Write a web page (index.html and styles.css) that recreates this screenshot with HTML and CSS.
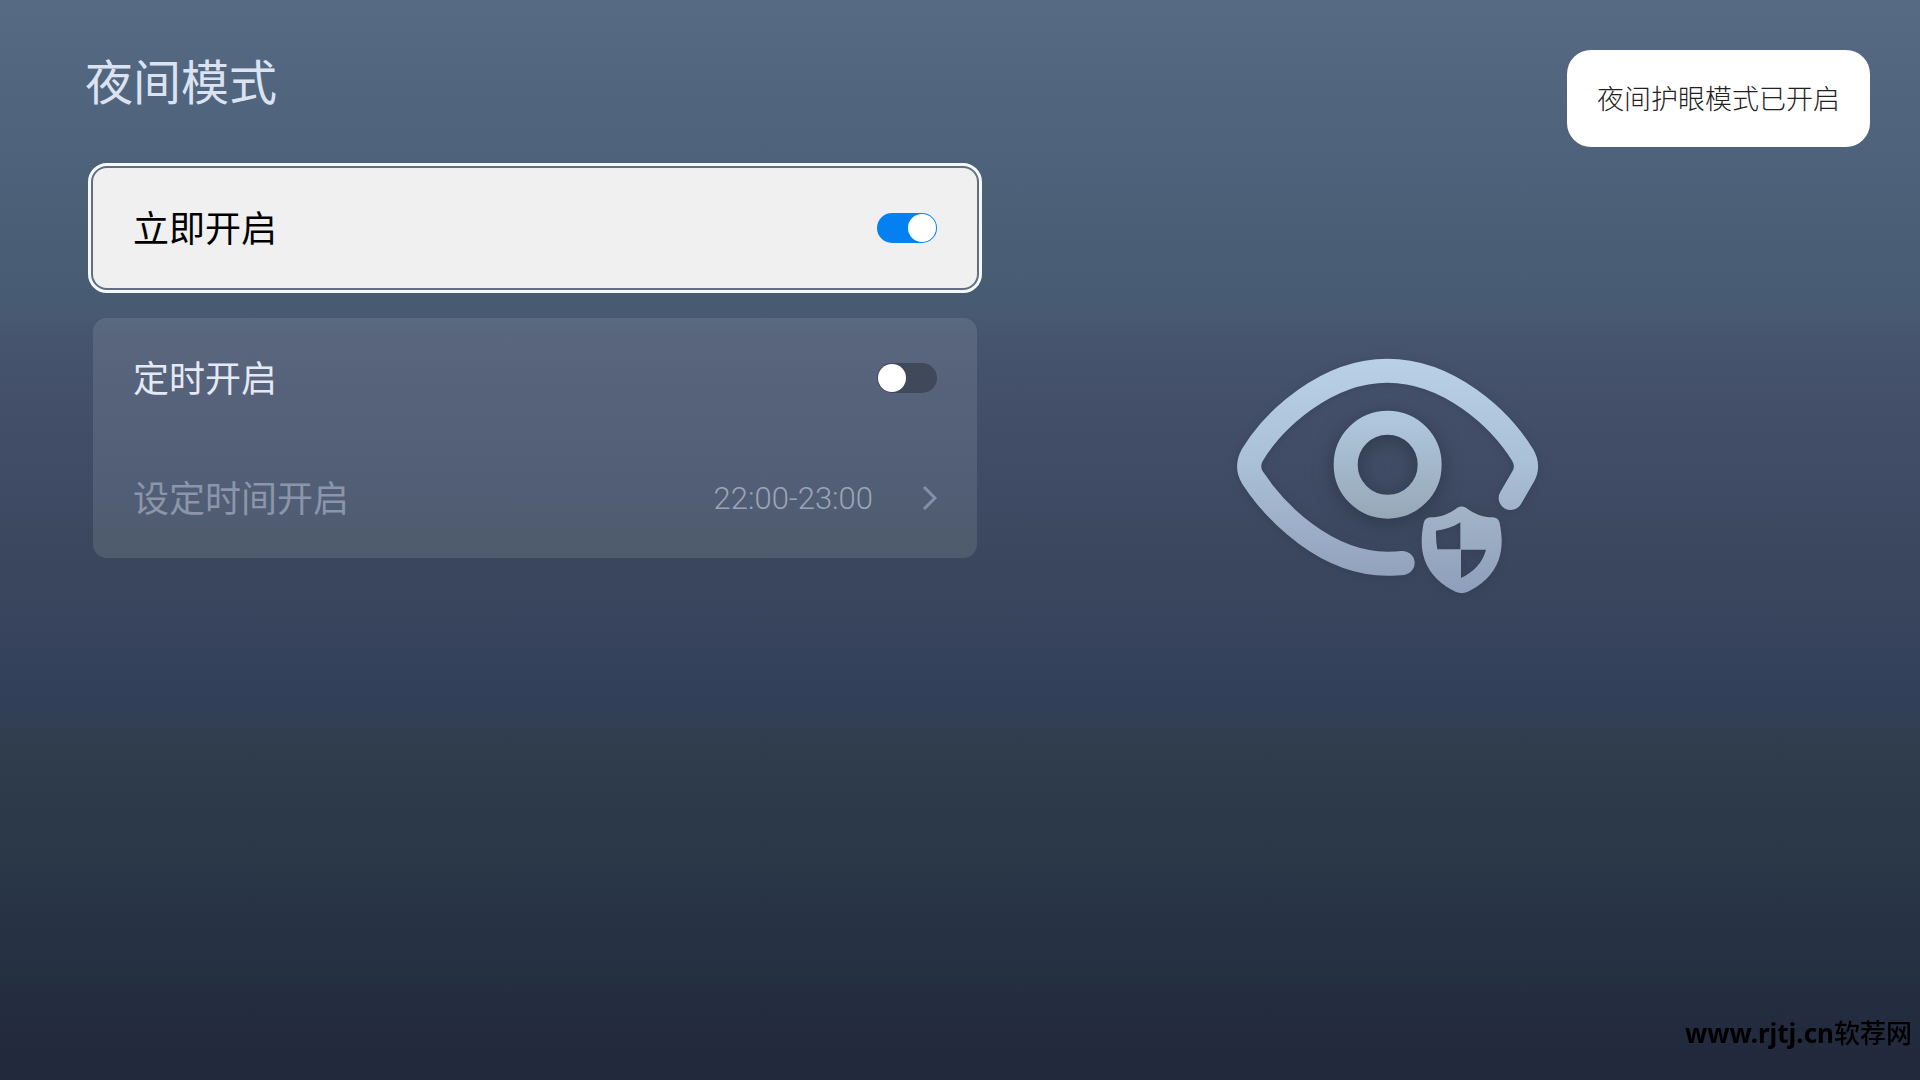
FILE: index.html
```
<!DOCTYPE html>
<html lang="zh-CN">
	<head>
		<meta charset="utf-8" />
		<title>夜间模式</title>
		<link rel="stylesheet" href="styles.css">
	</head>
	<body>
		<h1>夜间模式</h1>

		<div class="container">
			<div class="list">
				<div class="card focus">
					<label class="row">
						<span>立即开启</span>
						<input type="checkbox" class="switch" checked />
					</label>
				</div>

				<div class="card group">
					<label class="row">
						<span>定时开启</span>
						<input type="checkbox" class="switch" />
					</label>
					<button type="button" class="row time" disabled>
						<span>设定时间开启</span>
						<span class="value">22:00-23:00</span>
						<svg class="arrow" viewBox="0 0 16 28">
							<path d="M3 3l11 11L3 25" />
						</svg>
					</button>
				</div>
			</div>

			<div class="picture">
				<svg class="eye" viewBox="0 0 1020 810">
					<defs>
						<linearGradient id="line" gradientUnits="userSpaceOnUse" x1="0" y1="55" x2="0" y2="710">
							<stop offset="0" stop-color="#b9d0e6" />
							<stop offset=".5" stop-color="#a9bfd5" />
							<stop offset="1" stop-color="#92a1bc" />
						</linearGradient>
						<linearGradient id="ball" gradientUnits="userSpaceOnUse" x1="0" y1="212" x2="0" y2="536">
							<stop offset="0" stop-color="#b1c9e0" />
							<stop offset="1" stop-color="#96a7b7" />
						</linearGradient>
						<linearGradient id="guard" gradientUnits="userSpaceOnUse" x1="0" y1="500" x2="0" y2="760">
							<stop offset="0" stop-color="#a3b4c8" />
							<stop offset="1" stop-color="#8d9fba" />
						</linearGradient>
					</defs>
					<path class="lid" stroke="url(#line)" d="M548 669C532 671 518 671 502 671C318 671 166 518 97 412Q78 380 97 345C160 240 318 92 502 92C688 92 842 238 908 345Q928 380 908 412L872 474" />
					<circle class="ball" stroke="url(#ball)" cx="503" cy="374" r="126" />
					<path class="guard" fill="url(#guard)" fill-rule="evenodd" d="M712 503Q725 496 738 503C764 522 788 532 818 532Q835 533 839 549C847 590 848 625 836 660C820 704 785 736 742 756Q725 763 708 756C665 736 630 704 614 660C602 625 603 590 611 549Q615 533 632 532C662 532 686 522 712 503ZM721 547C699 561 676 569 648 572Q647 600 652 628H721ZM723 629V714C764 694 788 666 798 629Z" />
				</svg>
			</div>
		</div>

		<div class="toast" role="status">夜间护眼模式已开启</div>
		<a href="#" class="site"><b>www.rjtj.cn</b>软荐网</a>
	</body>
</html>
```

FILE: styles.css
```
*{
	margin: 0;
	padding: 0;
	box-sizing: border-box;
	text-decoration: none;
}
body{
	min-height: 100vh;
	padding: 44px 118px 48px 93px;
	font-family: "Noto Sans CJK SC", sans-serif;
	color: #e3e9f5;
	background: linear-gradient(#576a83 0%, #50637c 12%, #465b72 29%, #47546e 31%, #434f69 38%, #3c4860 50%, #323f58 66%, #303d4c 69%, #2a3747 80%, #242f40 91%, #242c40 93%, #21283b 100%);
}
h1{
	margin-left: -8px;
	font-size: 48px;
	font-weight: 400;
	line-height: 70px;
	color: #dbe2f2;
}
.container{
	display: grid;
	grid-template-columns: 884fr 825fr;
	margin-top: 54px;
}
.list{
	display: flex;
	flex-direction: column;
	gap: 30px;
}
.card{
	border-radius: 14px;
}
.focus{
	color: #000;
	background: #f0f0f0;
	outline: 3px solid #f4faff;
	outline-offset: 2px;
	box-shadow: 0 0 0 2px #626f80;
}
.group{
	background: linear-gradient(rgba(235,245,255,.11), rgba(235,250,255,.11) 87%, rgba(228,255,215,.11) 88%);
}
.row{
	display: flex;
	align-items: center;
	width: 100%;
	height: 120px;
	padding: 0 40px;
	font-size: 36px;
	cursor: pointer;
}
.row span:first-child{
	flex: 1;
	padding-bottom: 4px;
	text-align: left;
}
.switch{
	appearance: none;
	width: 60px;
	height: 30px;
	padding: 1px;
	border-radius: 15px;
	background: #3f495a;
	cursor: pointer;
}
.switch::before{
	content: "";
	display: block;
	width: 28px;
	height: 28px;
	border-radius: 50%;
	background: #fff;
}
.switch:checked{
	background: #0580f0;
}
.switch:checked::before{
	margin-left: auto;
}
.time{
	border: none;
	font-family: inherit;
	color: #8b95ab;
	background: none;
}
.value{
	font-family: Roboto, sans-serif;
	font-size: 31px;
	font-weight: 300;
	color: #9aa4b9;
}
.arrow{
	width: 16px;
	height: 28px;
	margin-left: 48px;
	fill: none;
	stroke: #8490a7;
	stroke-width: 3;
}
.picture{
	display: flex;
	justify-content: center;
	align-items: flex-start;
	padding-top: 172px;
}
.eye{
	width: 340px;
	height: 270px;
}
.lid, .ball{
	fill: none;
	stroke-width: 72;
	stroke-linecap: round;
	filter: drop-shadow(0 4px 12px rgba(35,45,60,.3));
}
.ball{
	filter: drop-shadow(0 12px 30px rgba(35,45,60,.6));
}
.guard{
	filter: drop-shadow(0 4px 12px rgba(35,45,60,.3));
}
.toast{
	position: fixed;
	top: 50px;
	right: 50px;
	padding: 0 30px 2px;
	border-radius: 24px;
	font-size: 27px;
	font-weight: 300;
	line-height: 95px;
	color: #222;
	background: #fff;
}
.site{
	position: fixed;
	right: 8px;
	bottom: 29px;
	font-size: 26px;
	font-weight: 500;
	line-height: 36px;
	color: #000;
}
.site b{
	font-family: "Noto Sans", sans-serif;
	font-weight: 700;
}
```
